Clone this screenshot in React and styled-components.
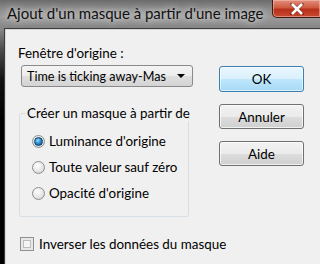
import React from 'react';
import styled, { createGlobalStyle } from 'styled-components';

const Global = createGlobalStyle`
  html, body { margin: 0; padding: 0; background: #000; }
  body { width: 320px; height: 264px; overflow: hidden; }
`;

const Window = styled.div`
  width: 320px;
  height: 264px;
  display: flex;
  flex-direction: column;
  background: linear-gradient(180deg, #7a7a7a 0px, #8a8a8a 28px, #4a4a4a 50px, #111 80px, #000 120px);
  font-family: "Segoe UI", Lato, "Noto Sans", sans-serif;
  overflow: hidden;
  white-space: nowrap;
`;

const TitleBar = styled.div`
  height: 28px;
  flex: none;
  display: flex;
  justify-content: space-between;
  align-items: flex-start;
  background: linear-gradient(180deg, #6c6c6c 0%, #8e8e8e 35%, #9c9c9c 60%, #858585 100%);
`;

const Title = styled.div`
  padding: 4px 0 0 7px;
  font-size: 15px;
  color: #111;
  text-shadow: 0 0 6px rgba(230, 230, 230, 0.9), 0 0 10px rgba(220, 220, 220, 0.7);
`;

const CloseButton = styled.div`
  width: 47px;
  height: 17px;
  margin-right: -1px;
  display: flex;
  align-items: center;
  justify-content: center;
  border: 1px solid #3a1a14;
  border-top: none;
  border-radius: 0 0 0 5px;
  background: linear-gradient(180deg, #e0907e 0%, #cf5a40 45%, #b8301a 55%, #c84a30 100%);
  box-shadow: inset 0 0 0 1px rgba(255, 200, 190, 0.5);
`;

const Body = styled.div`
  flex: 1;
  display: flex;
  padding-left: 4px;
`;

const Content = styled.div`
  flex: 1;
  background: #f0f0f0;
  border-top: 1px solid #3c3c3c;
  border-left: 1px solid #3c3c3c;
  box-shadow: inset 1px 1px 0 #d8d8d8;
  display: flex;
  padding: 0 0 0 15px;
  font-size: 13.4px;
  color: #000;
`;

const LeftColumn = styled.div`
  width: 173px;
  flex: none;
  display: flex;
  flex-direction: column;
`;

const RightColumn = styled.div`
  margin-left: 26px;
  padding-top: 37px;
  display: flex;
  flex-direction: column;
  gap: 12px;
`;

const Label = styled.div`
  margin: 16px 0 0 -2px;
  height: 17px;
  line-height: 17px;
`;

const Select = styled.div`
  margin-top: 3px;
  margin-left: 1px;
  height: 20px;
  border: 1px solid #8a8a8a;
  border-radius: 3px;
  background: linear-gradient(180deg, #f4f4f4 0%, #ececec 50%, #dedede 51%, #d4d4d4 100%);
  display: flex;
  align-items: center;
  justify-content: space-between;
  padding: 0 7px 0 5px;
  font-size: 12.6px;
`;

const Arrow = styled.span`
  width: 0;
  height: 0;
  border-left: 4px solid transparent;
  border-right: 4px solid transparent;
  border-top: 4px solid #000;
`;

const Group = styled.fieldset`
  margin: 18px 0 0 -1px;
  padding: 12px 0 0 12px;
  width: 170px;
  height: 112px;
  box-sizing: border-box;
  border: 1px solid #d5dfe5;
  border-radius: 3px;
  display: flex;
  flex-direction: column;
  gap: 10px;
  min-width: 0;
`;

const Legend = styled.legend`
  padding: 0 1px;
  margin-left: -6px;
  line-height: 16px;
`;

const OptionRow = styled.label`
  display: flex;
  align-items: center;
  gap: 4px;
  height: 16px;
`;

const Radio = styled.span`
  width: 13px;
  height: 13px;
  box-sizing: border-box;
  border-radius: 50%;
  border: 1px solid #8c8f91;
  background: radial-gradient(circle at 40% 35%, #ffffff 0%, #e6e6e6 55%, #c8c8c8 100%);
  display: flex;
  align-items: center;
  justify-content: center;
  flex: none;
`;

const RadioDot = styled.span`
  width: 7px;
  height: 7px;
  border-radius: 50%;
  background: radial-gradient(circle at 40% 35%, #9be0ff 0%, #2f8fd0 45%, #0e4f8a 100%);
  border: 0.5px solid #0b3c66;
`;

const CheckRow = styled.label`
  margin-top: 19px;
  display: flex;
  align-items: center;
  gap: 5px;
  height: 16px;
`;

const CheckBox = styled.span`
  width: 14px;
  height: 14px;
  box-sizing: border-box;
  border: 1px solid #8e8f8f;
  background: #f4f4f4;
  box-shadow: inset 0 0 0 2px #e8e8e8, inset 0 0 0 3px #bcbcbc;
  flex: none;
`;

const Button = styled.div`
  width: 85px;
  height: ${p => (p.$default ? 26 : 25)}px;
  box-sizing: border-box;
  border: 1px solid ${p => (p.$default ? '#3c7fb1' : '#707070')};
  border-radius: 3px;
  display: flex;
  align-items: center;
  justify-content: center;
  background: ${p =>
    p.$default
      ? 'linear-gradient(180deg, #eaf6fd 0%, #d9f0fc 50%, #bee6fd 51%, #a7d9f5 100%)'
      : 'linear-gradient(180deg, #f2f2f2 0%, #ebebeb 50%, #dddddd 51%, #cfcfcf 100%)'};
  box-shadow: inset 0 0 0 1px ${p => (p.$default ? 'rgba(255,255,255,0.6)' : 'rgba(255,255,255,0.7)')};
`;

const options = [
  { label: "Luminance d'origine", checked: true },
  { label: 'Toute valeur sauf zéro', checked: false },
  { label: "Opacité d'origine", checked: false },
];

export default function App() {
  return (
    <>
      <Global />
      <Window>
        <TitleBar>
          <Title>Ajout d'un masque à partir d'une image</Title>
          <CloseButton>
            <svg width="14" height="12" viewBox="0 0 14 12">
              <path d="M2 1 L12 11 M12 1 L2 11" stroke="#3a0a00" strokeWidth="4" strokeLinecap="square" opacity="0.35" />
              <path d="M2 1 L12 11 M12 1 L2 11" stroke="#fff" strokeWidth="2.6" />
            </svg>
          </CloseButton>
        </TitleBar>
        <Body>
          <Content>
            <LeftColumn>
              <Label>Fenêtre d'origine :</Label>
              <Select>
                <span>Time is ticking away-Mas</span>
                <Arrow />
              </Select>
              <Group>
                <Legend>Créer un masque à partir de</Legend>
                {options.map(o => (
                  <OptionRow key={o.label}>
                    <Radio>{o.checked && <RadioDot />}</Radio>
                    {o.label}
                  </OptionRow>
                ))}
              </Group>
              <CheckRow>
                <CheckBox />
                Inverser les données du masque
              </CheckRow>
            </LeftColumn>
            <RightColumn>
              <Button $default>OK</Button>
              <Button>Annuler</Button>
              <Button>Aide</Button>
            </RightColumn>
          </Content>
        </Body>
      </Window>
    </>
  );
}
